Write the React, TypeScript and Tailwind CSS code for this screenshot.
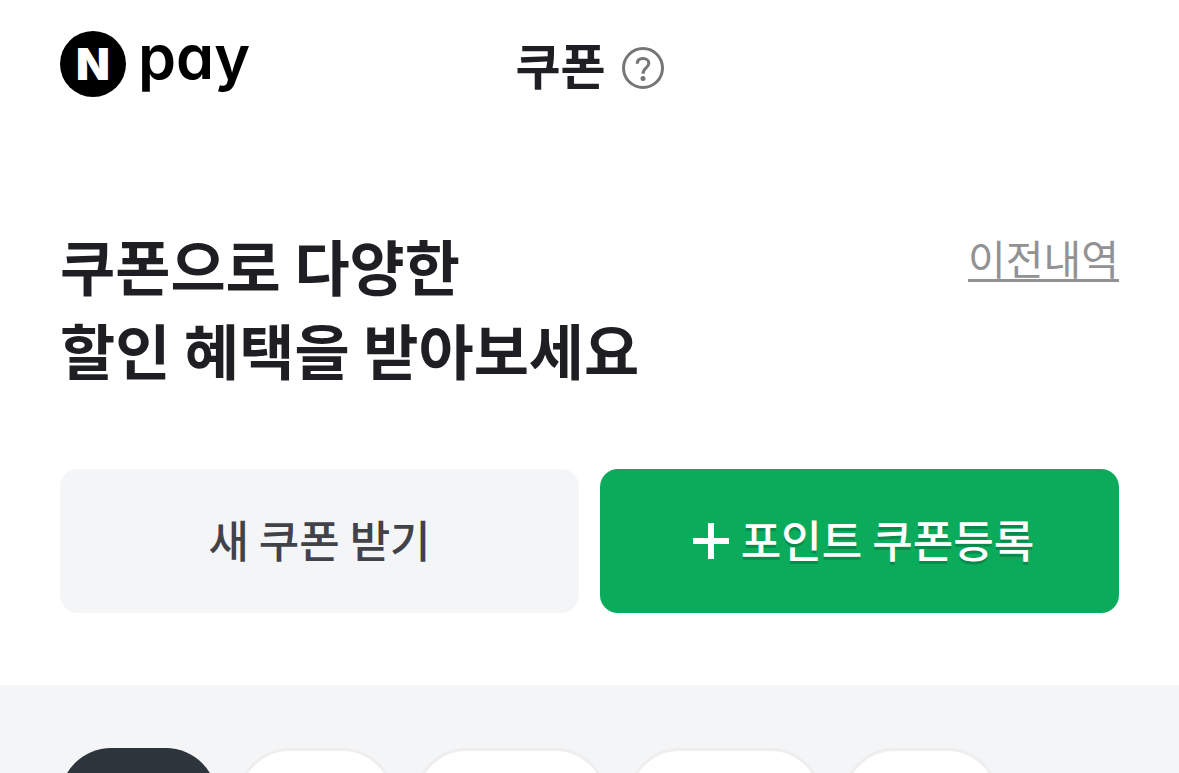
const filters = [
  { label: "전체", className: "w-[157px] bg-[#2d343c]" },
  { label: "쇼핑", className: "w-[156px] border-3 border-[#eeeeee] bg-white" },
  { label: "포인트", className: "w-[192px] border-3 border-[#eeeeee] bg-white" },
  { label: "브랜드", className: "w-[194px] border-3 border-[#eeeeee] bg-white" },
  { label: "기타", className: "w-[156px] border-3 border-[#eeeeee] bg-white" },
];

function Logo() {
  return (
    <a href="#home" aria-label="N pay" className="flex items-start gap-3 text-black">
      <span className="flex size-[66px] items-center justify-center rounded-full bg-black font-[Inter,sans-serif] text-[44px] leading-none font-black text-white">
        N
      </span>
      <span className="font-[Inter,sans-serif] text-[61px] leading-[52px] font-semibold [font-feature-settings:'cv11']">pay</span>
    </a>
  );
}

function Header() {
  return (
    <header className="grid grid-cols-[1fr_auto_1fr] items-center px-[60px] pt-[31px]">
      <Logo />
      <div className="flex items-center gap-4">
        <h1 className="text-[49px] leading-[64px] font-bold text-[#1e1e23]">쿠폰</h1>
        <button type="button" aria-label="도움말" className="mt-2">
          <svg viewBox="0 0 42 42" className="size-[42px]" fill="none" stroke="#767678" aria-hidden="true">
            <circle cx="21" cy="21" r="19.5" strokeWidth="3" />
            <path d="M15.200 16.800C15.200 13.200 17.700 11.500 21 11.500C24.500 11.500 26.800 13.400 26.800 16.200C26.800 18.500 25.600 19.700 23.900 21.100C22 22.700 21 23.800 21 26.700" strokeWidth="3" />
            <circle cx="21" cy="31.500" r="2.500" fill="#767678" stroke="none" />
          </svg>
        </button>
      </div>
    </header>
  );
}

export default function App() {
  return (
    <div className="flex h-screen flex-col overflow-hidden bg-white font-['Noto_Sans_CJK_KR',sans-serif]">
      <Header />
      <main className="flex min-h-0 flex-1 flex-col">
        <section className="shrink-0 px-[60px] pt-[126px] pb-[72px]">
          <div className="flex items-start justify-between">
            <h2 className="text-[60px] leading-[84px] font-bold text-[#1e1e23]">
              쿠폰으로 다양한
              <br />
              할인 혜택을 받아보세요
            </h2>
            <a
              href="#history"
              className="mt-3 border-b-3 border-[#929294] text-[41px] leading-[44px] text-[#929294]"
            >
              이전내역
            </a>
          </div>
          <div className="mt-[78px] grid grid-cols-2 gap-[21px]">
            <button
              type="button"
              className="h-36 rounded-[18px] bg-[#f3f5f7] pb-1 text-[44px] font-medium text-[#424249]"
            >
              새 쿠폰 받기
            </button>
            <button
              type="button"
              className="flex h-36 items-center justify-center gap-3 rounded-[18px] bg-[#0bab5c] pl-2 text-[44px] font-medium text-white"
            >
              <svg viewBox="0 0 36 36" className="size-9" stroke="currentColor" strokeWidth="6" aria-hidden="true">
                <path d="M18 0V36M0 18H36" />
              </svg>
              <span className="pb-1 [text-shadow:0_3px_0_rgb(0_0_0/0.2)]">포인트 쿠폰등록</span>
            </button>
          </div>
        </section>
        <section className="min-h-0 flex-1 overflow-hidden bg-[#f3f5f7] px-[60px] pt-[63px]">
          <div className="flex gap-[21px]">
            {filters.map((filter) => (
              <button
                key={filter.label}
                type="button"
                aria-label={filter.label}
                className={`h-[102px] shrink-0 rounded-full ${filter.className}`}
              />
            ))}
          </div>
        </section>
      </main>
    </div>
  );
}
